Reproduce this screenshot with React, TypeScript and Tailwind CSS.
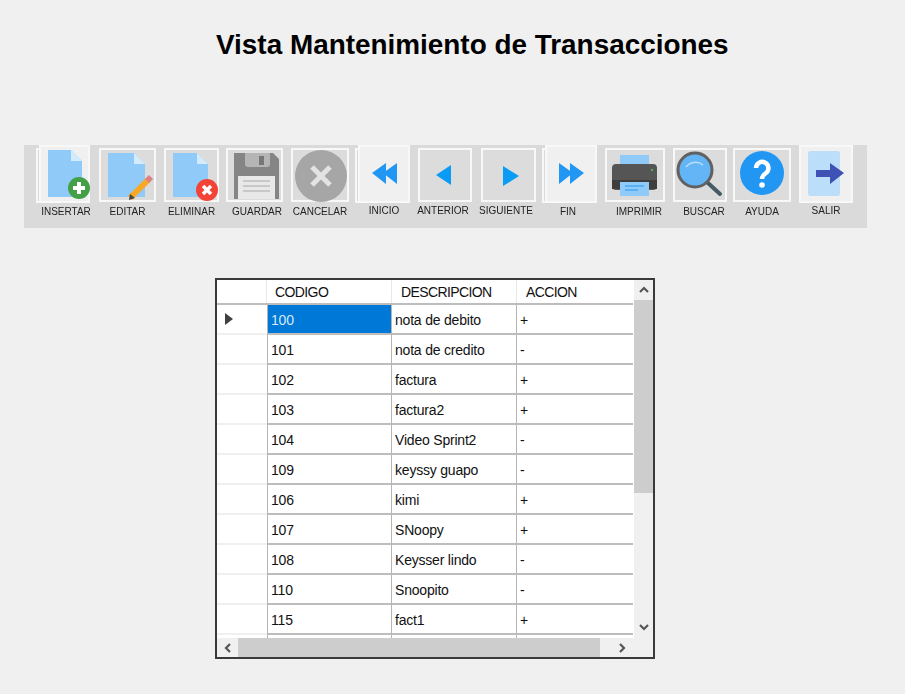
import type { ReactNode } from 'react';

const sans = { fontFamily: '"Liberation Sans", Arial, sans-serif' };

interface ToolItem {
  label: string;
  box: string;
  item: string;
  labelCls: string;
  ghost?: string;
  viewBox: string;
  icon: ReactNode;
}

function Doc({ x, y, w, h }: { x: number; y: number; w: number; h: number }) {
  const fold = 11;
  return (
    <g>
      <path d={`M${x} ${y}h${w - fold}l${fold} ${fold}v${h - fold}h${-w}z`} fill="#90caf9" />
      <path d={`M${x + w - fold} ${y}l${fold} ${fold}h${-fold}z`} fill="#d4ebfc" />
    </g>
  );
}

const tall = 'mt-0 h-[58px] bg-[#f0f0f0]';
const short = 'mt-[3px] h-[54px] bg-[#dcdcdc]';

const tools: ToolItem[] = [
  {
    label: 'INSERTAR', item: 'ml-[15px] w-[51px]', box: tall, labelCls: 'ml-[3px] mt-[1px]', ghost: '-left-[5px]',
    viewBox: '39 145 51 58',
    icon: (
      <>
        <Doc x={48} y={150} w={34} h={47} />
        <circle cx={79} cy={188} r={11} fill="#43a047" />
        <path d="M79 182v12M73 188h12" stroke="#fff" strokeWidth={4} />
      </>
    ),
  },
  {
    label: 'EDITAR', item: 'ml-[9px] w-[57px]', box: short, labelCls: 'mt-[1px]',
    viewBox: '99 148 57 54',
    icon: (
      <>
        <Doc x={108} y={153} w={37} h={44} />
        <path d="M130 198l18-18" stroke="#f9a825" strokeWidth={6} />
        <path d="M147 181l4-4" stroke="#e08080" strokeWidth={6} />
        <path d="M129 200l1-6 5 4z" fill="#444" />
      </>
    ),
  },
  {
    label: 'ELIMINAR', item: 'ml-[8px] w-[55px]', box: short, labelCls: 'mt-[1px]',
    viewBox: '164 148 55 54',
    icon: (
      <>
        <Doc x={173} y={153} w={35} h={44} />
        <circle cx={207} cy={190} r={11} fill="#f44336" />
        <path d="M203 186l8 8M211 186l-8 8" stroke="#fff" strokeWidth={3.5} />
      </>
    ),
  },
  {
    label: 'GUARDAR', item: 'ml-[7px] w-[57px]', box: short, labelCls: 'ml-[5px] mt-[1px]',
    viewBox: '226 148 57 54',
    icon: (
      <>
        <path d="M234 153h39l6 6v40h-45z" fill="#858585" />
        <path d="M245 153h25v11a3 3 0 0 1-3 3h-19a3 3 0 0 1-3-3z" fill="#b5b5b5" />
        <rect x={259} y={156} width={5} height={9} fill="#777" />
        <rect x={238} y={176} width={37} height={23} fill="#e8e8e8" />
        <path d="M243 181h27M243 186h27M243 191h27" stroke="#a8a8a8" strokeWidth={1} />
      </>
    ),
  },
  {
    label: 'CANCELAR', item: 'ml-[8px] w-[58px]', box: short, labelCls: 'mt-[1px]',
    viewBox: '291 148 58 54',
    icon: (
      <>
        <circle cx={321} cy={176} r={26} fill="#a6a6a6" />
        <path d="M312 167l18 18M330 167l-18 18" stroke="#e3e3e3" strokeWidth={5} />
      </>
    ),
  },
  {
    label: 'INICIO', item: 'ml-[9px] w-[52px]', box: tall, labelCls: 'mt-0', ghost: '-left-[5px]',
    viewBox: '358 145 52 58',
    icon: <path d="M372 173l14-10v21zM383 173l14-10v21z" fill="#2196f3" />,
  },
  {
    label: 'ANTERIOR', item: 'ml-[8px] w-[54px]', box: short, labelCls: 'mr-[4px] mt-0',
    viewBox: '418 148 54 54',
    icon: <path d="M436 175l15-10v20z" fill="#0a9bf5" />,
  },
  {
    label: 'SIGUIENTE', item: 'ml-[9px] w-[55px]', box: short, labelCls: 'mr-[5px] mt-0',
    viewBox: '481 148 55 54',
    icon: <path d="M519 176l-16-10v20z" fill="#0a9bf5" />,
  },
  {
    label: 'FIN', item: 'ml-[9px] w-[52px]', box: tall, labelCls: 'mr-[6px] mt-[1px]', ghost: '-left-[5px]',
    viewBox: '545 145 52 58',
    icon: <path d="M559 163l14 10-14 11zM570 163l14 10-14 11z" fill="#2196f3" />,
  },
  {
    label: 'IMPRIMIR', item: 'ml-[8px] w-[60px]', box: short, labelCls: 'ml-[8px] mt-[1px]',
    viewBox: '605 148 60 54',
    icon: (
      <>
        <rect x={620} y={155} width={29} height={12} fill="#90caf9" />
        <path d="M616 164h37a4 4 0 0 1 4 4v18a4 4 0 0 1-4 4h-37a4 4 0 0 1-4-4v-18a4 4 0 0 1 4-4z" fill="#555" />
        <rect x={612} y={180} width={45} height={9} fill="#3d3d3d" />
        <circle cx={652} cy={170} r={1.2} fill="#4caf50" />
        <rect x={620} y={182} width={29} height={14} fill="#90caf9" />
        <path d="M625 186h19M625 190h13" stroke="#2196f3" strokeWidth={1.2} />
      </>
    ),
  },
  {
    label: 'BUSCAR', item: 'ml-[8px] w-[54px]', box: short, labelCls: 'ml-[8px] mt-[1px]',
    viewBox: '673 148 54 54',
    icon: (
      <>
        <path d="M708 183l12 11" stroke="#455a64" strokeWidth={4} strokeLinecap="round" />
        <circle cx={695} cy={170} r={17} fill="#64b5f6" stroke="#616161" strokeWidth={3} />
        <path d="M686 167a12 12 0 0 1 17-2" fill="none" stroke="#bbdefb" strokeWidth={1.5} />
      </>
    ),
  },
  {
    label: 'AYUDA', item: 'ml-[6px] w-[58px]', box: short, labelCls: 'mt-[1px]',
    viewBox: '733 148 58 54',
    icon: (
      <>
        <circle cx={762} cy={173} r={22} fill="#2196f3" />
        <path d="M756 168a6.2 6.2 0 1 1 10 5c-3 2-4 3-4 6" fill="none" stroke="#fff" strokeWidth={4.5} />
        <circle cx={762} cy={185} r={2.8} fill="#fff" />
      </>
    ),
  },
  {
    label: 'SALIR', item: 'ml-[8px] w-[54px]', box: tall, labelCls: 'mt-0',
    viewBox: '799 145 54 58',
    icon: (
      <>
        <rect x={808} y={151} width={32} height={45} rx={3} fill="#bbdefb" />
        <path d="M816 170h14v-7l14 10-14 11v-7h-14z" fill="#3f51b5" />
      </>
    ),
  },
];

const rows = [
  ['100', 'nota de debito', '+'],
  ['101', 'nota de credito', '-'],
  ['102', 'factura', '+'],
  ['103', 'factura2', '+'],
  ['104', 'Video Sprint2', '-'],
  ['109', 'keyssy guapo', '-'],
  ['106', 'kimi', '+'],
  ['107', 'SNoopy', '+'],
  ['108', 'Keysser lindo', '-'],
  ['110', 'Snoopito', '-'],
  ['115', 'fact1', '+'],
  ['', '', ''],
];

function Chevron({ d }: { d: string }) {
  return (
    <svg width="12" height="12" viewBox="0 0 12 12">
      <path d={d} fill="none" stroke="#555" strokeWidth={2.2} />
    </svg>
  );
}

export default function App() {
  return (
    <div className="w-[905px] h-[694px] bg-[#f0f0f0] overflow-hidden" style={sans}>
      <h1 className="pl-[216px] pt-[30px] h-[145px] text-[27.9px] leading-[30px] font-bold text-black whitespace-nowrap">
        Vista Mantenimiento de Transacciones
      </h1>

      <div className="ml-[24px] w-[843px] h-[83px] bg-[#dadada] flex blur-[0.4px]">
        {tools.map((t) => (
          <div key={t.label} className={`${t.item} flex flex-col items-center shrink-0`}>
            <div className="h-[60px] w-full">
              <div className={`${t.box} relative w-full border-2 border-[#f8f8f8]`}>
                {t.ghost && (
                  <div className={`absolute ${t.ghost} top-[1px] bottom-[-2px] w-[5px] border-l-2 border-y-2 border-[#f8f8f8]`} />
                )}
                <svg viewBox={t.viewBox} className="absolute -inset-[2px] w-[calc(100%+4px)] h-[calc(100%+4px)]">
                  {t.icon}
                </svg>
              </div>
            </div>
            <span className={`${t.labelCls} text-[10px] leading-[12px] text-[#222] whitespace-nowrap`}>{t.label}</span>
          </div>
        ))}
      </div>

      <div className="ml-[215px] mt-[50px] w-[440px] h-[381px] border-2 border-[#3a3a3a] flex flex-col text-[14px] tracking-[-0.2px] text-[#111]">
        <div className="flex flex-1 min-h-0">
          <div className="flex-1 min-w-0 bg-white overflow-hidden">
            <div className="flex h-[25px] w-[416px] border-b-2 border-[#bdbdbd] tracking-[-0.6px] leading-[24px]">
              <div className="w-[50px] border-r border-[#e8e8e8]" />
              <div className="w-[125px] pl-[8px] border-r border-[#e8e8e8]">CODIGO</div>
              <div className="w-[125px] pl-[9px] border-r border-[#e8e8e8]">DESCRIPCION</div>
              <div className="w-[116px] pl-[9px]">ACCION</div>
            </div>
            {rows.map((r, i) => (
              <div key={i} className="flex h-[30px] leading-[30px]">
                <div className="w-[50px] border-b-2 border-[#f0f0f0] flex items-center pl-[8px] pb-[1px]">
                  {i === 0 && (
                    <svg width="8" height="12" viewBox="0 0 8 12">
                      <path d="M0 0l8 6-8 6z" fill="#404040" />
                    </svg>
                  )}
                </div>
                <div
                  className={`w-[125px] pl-[3px] border-b-2 border-x border-x-[#b5b5b5] border-b-[#bdbdbd] ${
                    i === 0 ? 'bg-[#0078d7] text-[#d4e8f8]' : ''
                  }`}
                >
                  {r[0]}
                </div>
                <div className="w-[125px] pl-[3px] border-b-2 border-r border-r-[#b5b5b5] border-b-[#bdbdbd] whitespace-nowrap">
                  {r[1]}
                </div>
                <div className="w-[116px] pl-[3px] border-b-2 border-[#bdbdbd]">{r[2]}</div>
              </div>
            ))}
          </div>
          <div className="w-[19px] bg-[#f0f0f0] flex flex-col items-center shrink-0">
            <div className="h-[20px] flex items-center justify-center">
              <Chevron d="M2 8l4-4 4 4" />
            </div>
            <div className="w-full h-[193px] bg-[#cdcdcd]" />
            <div className="flex-1 flex items-end pb-[5px]">
              <Chevron d="M2 4l4 4 4-4" />
            </div>
          </div>
        </div>
        <div className="h-[19px] bg-[#f0f0f0] flex items-center shrink-0">
          <div className="w-[21px] flex justify-center">
            <Chevron d="M8 2L4 6l4 4" />
          </div>
          <div className="w-[362px] h-full bg-[#cdcdcd]" />
          <div className="ml-[16px] w-[12px]">
            <Chevron d="M4 2l4 4-4 4" />
          </div>
        </div>
      </div>
    </div>
  );
}
